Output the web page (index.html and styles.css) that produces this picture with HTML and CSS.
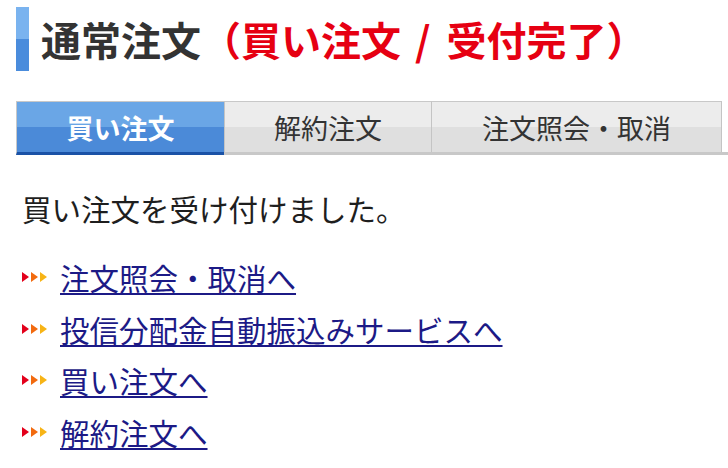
FILE: index.html
```html
<!DOCTYPE html>
<html lang="ja">
<head>
<meta charset="utf-8">
<title>通常注文</title>
<link rel="stylesheet" href="styles.css">
</head>
<body>
<div class="page">
  <h1 class="title">
    <span class="title-bar"></span>
    <span class="title-text">通常注文<span class="status">（買い注文<span class="slash">/</span>受付完了）</span></span>
  </h1>
  <div class="tabs">
    <div class="tab tab-active">買い注文</div>
    <div class="tab tab-2">解約注文</div>
    <div class="tab tab-3">注文照会・取消</div>
  </div>
  <p class="message">買い注文を受け付けました。</p>
  <ul class="links">
    <li class="link-row"><svg class="arrows" viewBox="0 0 26 12" width="26" height="12"><polygon points="0,1 7,6 0,11" fill="#e3001b"/><polygon points="9,1 16,6 9,11" fill="#f26a0f"/><polygon points="18,1 25,6 18,11" fill="#f7b416"/></svg><a href="#">注文照会・取消へ</a></li>
    <li class="link-row"><svg class="arrows" viewBox="0 0 26 12" width="26" height="12"><polygon points="0,1 7,6 0,11" fill="#e3001b"/><polygon points="9,1 16,6 9,11" fill="#f26a0f"/><polygon points="18,1 25,6 18,11" fill="#f7b416"/></svg><a href="#">投信分配金自動振込みサービスへ</a></li>
    <li class="link-row"><svg class="arrows" viewBox="0 0 26 12" width="26" height="12"><polygon points="0,1 7,6 0,11" fill="#e3001b"/><polygon points="9,1 16,6 9,11" fill="#f26a0f"/><polygon points="18,1 25,6 18,11" fill="#f7b416"/></svg><a href="#">買い注文へ</a></li>
    <li class="link-row"><svg class="arrows" viewBox="0 0 26 12" width="26" height="12"><polygon points="0,1 7,6 0,11" fill="#e3001b"/><polygon points="9,1 16,6 9,11" fill="#f26a0f"/><polygon points="18,1 25,6 18,11" fill="#f7b416"/></svg><a href="#">解約注文へ</a></li>
  </ul>
</div>
</body>
</html>
```
FILE: styles.css
```css
html, body {
  margin: 0;
  padding: 0;
  background: #ffffff;
}
body {
  font-family: "Noto Sans CJK JP", "Noto Sans", sans-serif;
  color: #222222;
  overflow: hidden;
}
.page {
  padding-top: 7px;
}
.title {
  display: flex;
  align-items: center;
  margin: 0 0 0 16px;
  height: 64px;
  font-weight: bold;
}
.title-bar {
  width: 13px;
  height: 64px;
  flex: none;
  background: linear-gradient(#7ab3ef 0 50%, #4a8cdc 50% 100%);
}
.title-text {
  margin-left: 12px;
  font-size: 40px;
  line-height: 64px;
  color: #333333;
  white-space: nowrap;
}
.status {
  color: #e60012;
}
.slash {
  margin: 0 16px 0 14px;
}
.tabs {
  display: flex;
  margin: 30px 0 0 16px;
  border-bottom: 3px solid #c8c8c8;
}
.tab {
  height: 50px;
  border-top: 1px solid #c8c8c8;
  border-left: 1px solid #c4c4c4;
  box-sizing: content-box;
  background: linear-gradient(#ececec 0 50%, #dfdfdf 50% 100%);
  font-size: 27px;
  color: #333333;
  display: flex;
  align-items: center;
  justify-content: center;
  flex: none;
}
.tab-active {
  width: 207px;
  background: linear-gradient(#6aa6e6 0 50%, #4b8ad8 50% 100%);
  color: #ffffff;
  font-weight: bold;
  border-bottom: 3px solid #1a52a6;
  margin-bottom: -3px;
  border-left-color: #c8c8c8;
}
.tab-2 {
  width: 206px;
}
.tab-3 {
  width: 289px;
  border-right: 1px solid #c4c4c4;
}
.message {
  margin: 33px 0 0 22px;
  font-size: 29.5px;
  line-height: 40px;
  color: #1e1e1e;
}
.links {
  list-style: none;
  margin: 23px 0 0 0;
  padding: 0 0 0 22px;
}
.link-row {
  display: flex;
  align-items: center;
  height: 51.7px;
}
.arrows {
  flex: none;
  margin-right: 12px;
}
.link-row a {
  font-size: 29.5px;
  color: #1c1a86;
  text-decoration: underline;
  text-decoration-thickness: 2px;
  text-underline-offset: 3px;
}
```
